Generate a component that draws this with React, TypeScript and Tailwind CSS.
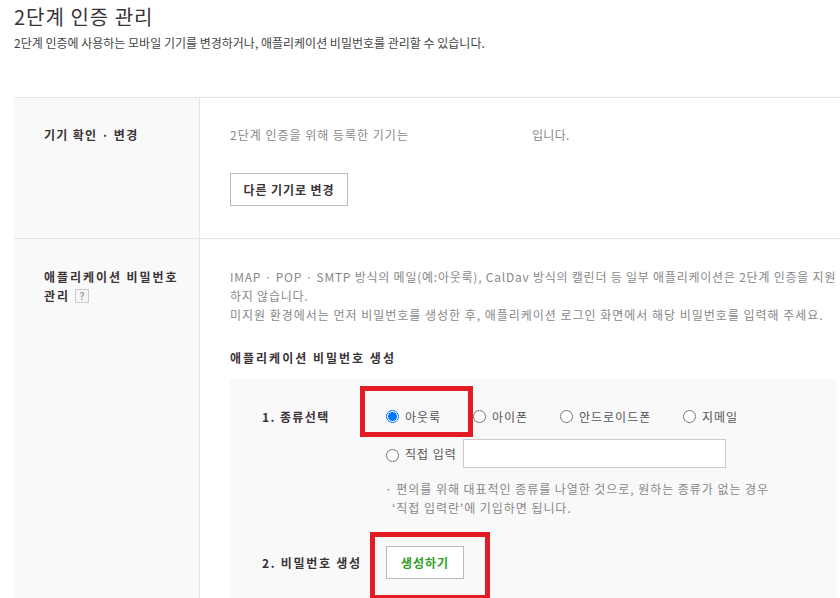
import React from 'react';

const font = { fontFamily: '"Noto Sans CJK KR", "Liberation Sans", sans-serif' };

function Radio({ label, checked, low, className }: { label: string; checked?: boolean; low?: boolean; className?: string }) {
  return (
    <label className={`flex items-center gap-[6px] ${className ?? ''}`}>
      <span className={`flex h-[13px] w-[13px] items-center justify-center rounded-full border ${checked ? 'border-[#0075ff]' : 'border-[#767676]'} bg-white ${low ? 'translate-y-[2px]' : ''}`}>
        {checked && <span className="h-[9px] w-[9px] rounded-full bg-[#0075ff]" />}
      </span>
      <span className="text-[12px] leading-[16px] tracking-[1px] text-[#555]">{label}</span>
    </label>
  );
}

export default function App() {
  return (
    <div className="relative h-[598px] w-[840px] overflow-hidden bg-white text-[#333]" style={font}>
      <header className="pl-[14px] pt-[3px]">
        <h1 className="text-[20px] leading-[28px] font-normal tracking-[1px] text-[#3a3338]">2단계 인증 관리</h1>
        <p className="mt-[4px] text-[12px] leading-[16px] tracking-[0px] text-[#444]">
          2단계 인증에 사용하는 모바일 기기를 변경하거나, 애플리케이션 비밀번호를 관리할 수 있습니다.
        </p>
      </header>

      <section className="ml-[14px] mt-[46px] border-t border-[#e5e5e5]">
        {/* 기기 확인 */}
        <div className="flex h-[141px] border-b border-[#e5e5e5]">
          <div className="w-[186px] shrink-0 border-r border-[#e5e5e5] bg-[#f9f9f9] pl-[30px] pt-[28px] text-[12px] leading-[18px] font-bold tracking-[1.3px] text-[#3a3338]">
            기기 확인 · 변경
          </div>
          <div className="pl-[30px] pt-[28px]">
            <p className="flex text-[12px] leading-[18px] tracking-[1px] text-[#888]">
              <span className="w-[302px]">2단계 인증을 위해 등록한 기기는</span>
              <span className="tracking-[0.3px]">입니다.</span>
            </p>
            <button className="mt-[29px] h-[33px] w-[118px] border border-[#bbb] bg-white text-[12px] font-bold tracking-[0.9px] text-[#3a3338]">
              다른 기기로 변경
            </button>
          </div>
        </div>

        {/* 애플리케이션 비밀번호 */}
        <div className="flex h-[360px]">
          <div className="w-[186px] shrink-0 border-r border-[#e5e5e5] bg-[#f9f9f9] pl-[30px] pt-[28px] text-[12px] leading-[19px] font-bold tracking-[1.95px] text-[#3a3338]">
            <p>애플리케이션 비밀번호</p>
            <p className="flex items-center gap-[5px]">
              관리
              <span className="flex h-[14px] w-[14px] items-center justify-center border border-[#ccc] bg-[#f5f5f5] text-[10px] font-normal leading-none tracking-normal text-[#777]">?</span>
            </p>
          </div>
          <div className="w-[640px] shrink-0 pl-[30px] pt-[28px]">
            <div className="w-[620px] whitespace-nowrap text-[12px] leading-[19px] text-[#888]">
              <p className="tracking-[0.77px]">IMAP · POP · SMTP 방식의 메일(예:아웃룩), CalDav 방식의 캘린더 등 일부 애플리케이션은 2단계 인증을 지원</p>
              <p className="tracking-[0.77px]">하지 않습니다.</p>
              <p className="tracking-[0.98px]">미지원 환경에서는 먼저 비밀번호를 생성한 후, 애플리케이션 로그인 화면에서 해당 비밀번호를 입력해 주세요.</p>
            </div>
            <h2 className="mt-[25px] text-[12px] leading-[18px] font-bold tracking-[2px] text-[#3a3338]">애플리케이션 비밀번호 생성</h2>
            <div className="mt-[12px] h-[240px] w-[606px] bg-[#f9f9f9] pl-[32px] pt-[29px]">
              <div className="flex">
                <span className="w-[124px] pt-px text-[12px] leading-[16px] font-bold tracking-[1.4px] text-[#3a3338]">1. 종류선택</span>
                <div className="flex items-center">
                  <Radio label="아웃룩" checked className="w-[87px]" />
                  <Radio label="아이폰" className="w-[87px]" />
                  <Radio label="안드로이드폰" className="w-[123px]" />
                  <Radio label="지메일" />
                </div>
              </div>
              <div className="ml-[124px] mt-[14px] flex items-center">
                <Radio label="직접 입력" low className="w-[77px]" />
                <input className="h-[29px] w-[263px] border border-[#ccc] bg-white" />
              </div>
              <div className="ml-[123px] mt-[11px] text-[12px] leading-[19px] tracking-[0.95px] whitespace-nowrap text-[#888]">
                <p>· 편의를 위해 대표적인 종류를 나열한 것으로, 원하는 종류가 없는 경우</p>
                <p className="pl-[7px]">‘직접 입력란’에 기입하면 됩니다.</p>
              </div>
              <div className="mt-[29px] flex items-center">
                <span className="w-[124px] text-[12px] font-bold tracking-[1.7px] text-[#3a3338]">2. 비밀번호 생성</span>
                <button className="h-[33px] w-[78px] border border-[#bbb] bg-white text-[12px] font-bold tracking-[1px] text-[#2f9e1f]">생성하기</button>
              </div>
            </div>
          </div>
        </div>
      </section>

      {/* 강조 표시 */}
      <div className="absolute left-[360px] top-[386px] h-[51px] w-[113px] border-[5px] border-[#e31b23]" />
      <div className="absolute left-[370px] top-[532px] h-[68px] w-[120px] border-[5px] border-[#e31b23]" />
    </div>
  );
}
